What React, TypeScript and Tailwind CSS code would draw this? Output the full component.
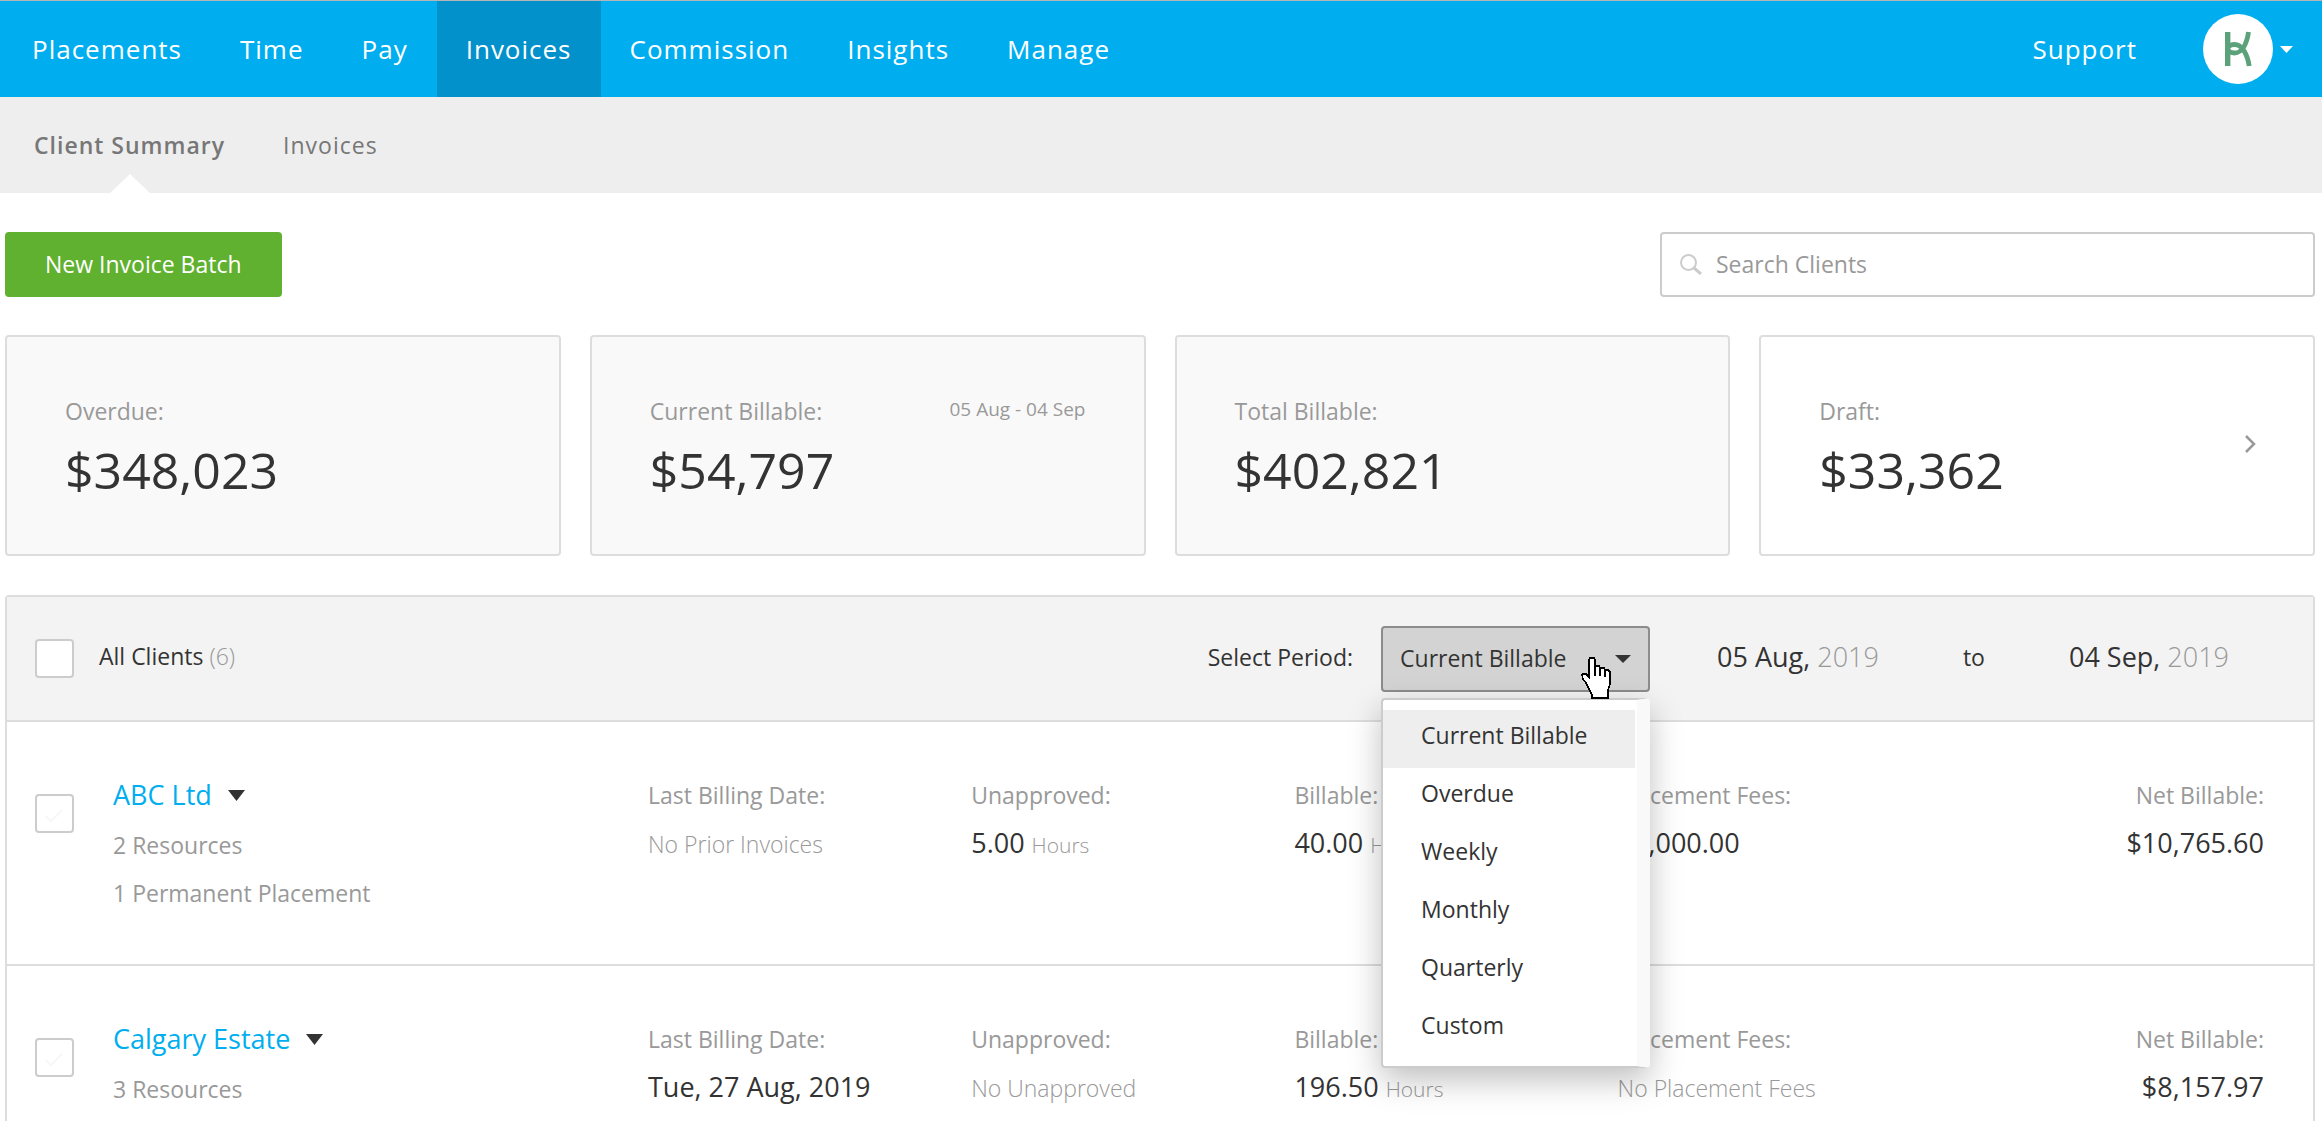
import { useState } from "react";
import type { ReactNode } from "react";

const NAV = ["Placements", "Time", "Pay", "Invoices", "Commission", "Insights", "Manage"];
const PERIODS = ["Current Billable", "Overdue", "Weekly", "Monthly", "Quarterly", "Custom"];

type Card = { label: string; value: string; range?: string; link?: boolean };
const CARDS: Card[] = [
  { label: "Overdue:", value: "$348,023" },
  { label: "Current Billable:", value: "$54,797", range: "05 Aug - 04 Sep" },
  { label: "Total Billable:", value: "$402,821" },
  { label: "Draft:", value: "$33,362", link: true },
];

type Figure = { label: string; value?: string; unit?: string; none?: string };
type Client = { name: string; details: string[]; figures: Figure[]; net: string };
const CLIENTS: Client[] = [
  {
    name: "ABC Ltd",
    details: ["2 Resources", "1 Permanent Placement"],
    figures: [
      { label: "Last Billing Date:", none: "No Prior Invoices" },
      { label: "Unapproved:", value: "5.00", unit: "Hours" },
      { label: "Billable:", value: "40.00", unit: "Hours" },
      { label: "Placement Fees:", value: "$5,000.00" },
    ],
    net: "$10,765.60",
  },
  {
    name: "Calgary Estate",
    details: ["3 Resources"],
    figures: [
      { label: "Last Billing Date:", value: "Tue, 27 Aug, 2019" },
      { label: "Unapproved:", none: "No Unapproved" },
      { label: "Billable:", value: "196.50", unit: "Hours" },
      { label: "Placement Fees:", none: "No Placement Fees" },
    ],
    net: "$8,157.97",
  },
];

function Caret({ className }: { className: string }) {
  return (
    <svg viewBox="0 0 18 10" preserveAspectRatio="none" className={className} fill="currentColor" aria-hidden="true">
      <path d="M0 0h18L9 10z" />
    </svg>
  );
}

function Logo() {
  return (
    <svg viewBox="0 0 70 70" className="size-[70px]" aria-hidden="true">
      <circle cx="35" cy="35" r="35" fill="#fff" />
      <g fill="none" stroke="#5ba27a" strokeWidth="5.4">
        <path d="M24.700 18v34" />
        <path d="M45.500 18C44 29 39.500 39 31.500 39c-3 0-5-1-6-2.500" strokeWidth="4.800" />
        <path d="M46.200 52C44.500 41 39.500 30.500 31.500 30.500c-3 0-5 1-6 2.500" strokeWidth="4.800" />
      </g>
    </svg>
  );
}

function Hand() {
  return (
    <svg
      viewBox="0 0 32 42"
      className="pointer-events-none absolute top-[31px] left-[200px] z-20 h-[42px] w-8"
      shapeRendering="crispEdges"
      fill="#fff"
      stroke="#000"
      strokeWidth="1.500"
      aria-hidden="true"
    >
      <path d="M8 20V3l1-2h4l1 2v6h4l1 2h4l1 2h3l2 2v12l-2 6v8H11v-3L8 32l-3-6-3-4-1-4 1-1h3z" />
      <path d="M14 8v11M19 10v9M24 12v8" />
    </svg>
  );
}

function Check({ label, hint }: { label: string; hint?: boolean }) {
  return (
    <span className="relative block size-[39px] shrink-0">
      <input type="checkbox" aria-label={label} className="block size-[39px] appearance-none rounded-sm border-2 border-[#cccccc] bg-white" />
      {hint && (
        <svg viewBox="0 0 18 14" className="pointer-events-none absolute top-[15px] left-[10px] h-[14px] w-[18px]" fill="none" aria-hidden="true">
          <path d="M1 7l5 5L17 1" stroke="#f7f7f7" strokeWidth="2" />
        </svg>
      )}
    </span>
  );
}

function FigureCell({ children, label, right }: { children: ReactNode; label: string; right?: boolean }) {
  return (
    <div className={right ? "flex flex-col text-right" : "flex flex-col"}>
      <span className="text-[23px] leading-8 text-[#999999]">{label}</span>
      <span className="mt-4 text-[27px] leading-8 whitespace-nowrap">{children}</span>
    </div>
  );
}

export default function App() {
  const [period, setPeriod] = useState("Current Billable");
  const [open, setOpen] = useState(true);

  return (
    <div className="h-screen overflow-hidden bg-white font-['Open_Sans','Noto_Sans',sans-serif] text-[23px] text-[#333333]">
      <header className="flex h-[97px] items-stretch justify-between border-t border-[#b5b5b5] bg-[#00aeef] text-[26px] tracking-[1px] text-white">
        <nav className="flex pl-[3px]">
          {NAV.map((n) => (
            <a
              key={n}
              href="#"
              className={n === "Invoices" ? "flex items-center bg-[#0291cb] px-[29px]" : "flex items-center px-[29px]"}
            >
              {n}
            </a>
          ))}
        </nav>
        <div className="flex items-center pr-[29px]">
          <a href="#" className="mr-[66px]">
            Support
          </a>
          <button type="button" aria-label="Account" className="flex items-center gap-[7px]">
            <Logo />
            <Caret className="h-[7px] w-[13px]" />
          </button>
        </div>
      </header>

      <nav className="flex h-24 items-center gap-[58px] bg-[#eeeeee] px-[34px] tracking-[1px] text-[#777777]">
        <a href="#" className="relative flex h-full items-center font-semibold">
          Client Summary
          <svg viewBox="0 0 40 19" className="absolute bottom-0 left-1/2 h-[19px] w-10 -translate-x-1/2" aria-hidden="true">
            <path d="M0 19L20 0l20 19z" fill="#fff" />
          </svg>
        </a>
        <a href="#">Invoices</a>
      </nav>

      <main className="pr-[7px] pl-[5px]">
        <div className="mt-[39px] flex items-center justify-between">
          <button type="button" className="h-[65px] rounded-sm bg-[#5fb12f] px-10 text-white">
            New Invoice Batch
          </button>
          <label className="flex h-[65px] w-[655px] items-center gap-[14px] rounded-sm border-2 border-[#cccccc] px-[18px]">
            <svg viewBox="0 0 22 21" className="h-[21px] w-[22px]" fill="none" stroke="#cccccc" strokeWidth="2" aria-hidden="true">
              <circle cx="8.500" cy="8.500" r="7.500" />
              <path d="M14 14l7 6" strokeWidth="3" />
            </svg>
            <input type="text" aria-label="Search Clients" placeholder="Search Clients" className="min-w-0 flex-1 bg-transparent outline-none placeholder:text-[#999999]" />
          </label>
        </div>

        <section className="mt-[38px] grid grid-cols-4 gap-[29px]">
          {CARDS.map((c) => (
            <div
              key={c.label}
              className={
                c.link
                  ? "relative h-[221px] rounded-sm border-2 border-[#dddddd] bg-white px-[58px] pt-[58px]"
                  : "relative h-[221px] rounded-sm border-2 border-[#dddddd] bg-[#f9f9f9] px-[58px] pt-[58px]"
              }
            >
              <div className="flex justify-between text-[#999999]">
                <span className="leading-8">{c.label}</span>
                {c.range && <span className="text-[19px] leading-7">{c.range}</span>}
              </div>
              <div className="mt-[17px] text-[50px] leading-[52px]">{c.value}</div>
              {c.link && (
                <a href="#" aria-label="Open drafts" className="absolute top-[98px] right-[57px]">
                  <svg viewBox="0 0 12 18" className="h-[18px] w-3" fill="none" stroke="#999999" strokeWidth="2.500" aria-hidden="true">
                    <path d="M2 1l8 8-8 8" />
                  </svg>
                </a>
              )}
            </div>
          ))}
        </section>

        <section className="mt-[39px] rounded-t-sm border-2 border-[#dddddd]">
          <div className="flex h-[123px] items-center bg-[#f3f3f3] pl-7">
            <Check label="All Clients" />
            <span className="ml-[25px] pb-[5px]">
              All Clients <span className="font-light text-[#999999]">(6)</span>
            </span>
            <label htmlFor="period" className="ml-auto pb-[2px]">
              Select Period:
            </label>
            <div className="relative ml-7">
              <button
                id="period"
                type="button"
                aria-haspopup="listbox"
                aria-expanded={open}
                onClick={() => setOpen(!open)}
                className="flex h-[66px] w-[269px] items-center justify-between rounded-sm border-2 border-[#8c8c8c] bg-[#d3d3d3] px-[17px]"
              >
                {period}
                <Caret className="h-2 w-4" />
              </button>
              <Hand />
              {open && (
                <ul
                  role="listbox"
                  aria-label="Period"
                  className="absolute top-full left-0 z-10 mt-[6px] w-[269px] rounded-sm border-2 border-r-[13px] border-[#cccccc] border-r-[#f9f9f9] bg-white pt-[10px] pr-[2px] pb-2 shadow-[0_12px_32px_rgba(0,0,0,0.25)]"
                >
                  {PERIODS.map((p) => (
                    <li key={p} role="option" aria-selected={p === period}>
                      <button
                        type="button"
                        onClick={() => setPeriod(p)}
                        className={p === period ? "h-[58px] w-full bg-[#eeeeee] pb-[6px] pl-[38px] text-left" : "h-[58px] w-full pb-[6px] pl-[38px] text-left"}
                      >
                        {p}
                      </button>
                    </li>
                  ))}
                </ul>
              )}
            </div>
            <div className="mr-[84px] ml-[67px] flex items-center pb-[3px] text-[27px]">
              <span>
                05 Aug, <span className="font-light text-[#999999]">2019</span>
              </span>
              <span className="mx-[84px] text-[23px]">to</span>
              <span>
                04 Sep, <span className="font-light text-[#999999]">2019</span>
              </span>
            </div>
          </div>

          {CLIENTS.map((c) => (
            <article key={c.name} className="flex h-[244px] items-start border-t-2 border-[#dddddd] pr-[49px] pl-7">
              <div className="mt-[72px]">
                <Check label={c.name} hint />
              </div>
              <div className="mt-[57px] ml-[39px] w-[535px] shrink-0">
                <button type="button" className="flex items-center gap-4 text-[27px] leading-8">
                  <span className="text-[#00aeef]">{c.name}</span>
                  <Caret className="h-[11px] w-[17px]" />
                </button>
                <div className="mt-[10px] leading-[48px] text-[#999999]">
                  {c.details.map((d) => (
                    <div key={d}>{d}</div>
                  ))}
                </div>
              </div>
              <div className="mt-[57px] grid flex-1 grid-cols-5">
                {c.figures.map((f) => (
                  <FigureCell key={f.label} label={f.label}>
                    {f.none && <span className="text-[23px] font-light text-[#999999]">{f.none}</span>}
                    {f.value}
                    {f.unit && <span className="ml-[7px] text-[21px] font-light text-[#999999]">{f.unit}</span>}
                  </FigureCell>
                ))}
                <FigureCell label="Net Billable:" right>
                  {c.net}
                </FigureCell>
              </div>
            </article>
          ))}
        </section>
      </main>
    </div>
  );
}
